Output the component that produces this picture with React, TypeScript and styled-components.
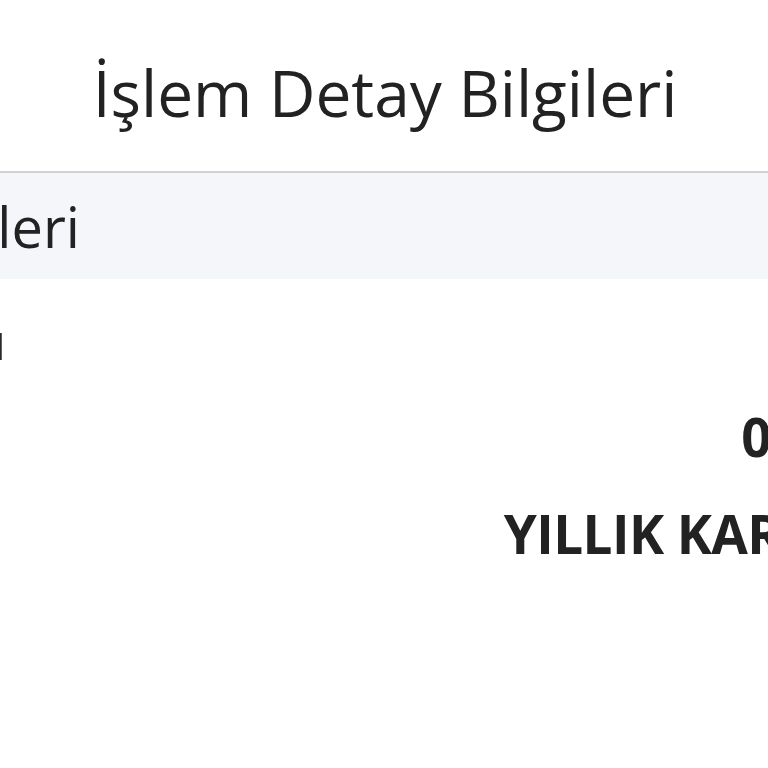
import React from 'react';
import styled, { createGlobalStyle } from 'styled-components';

const GlobalStyle = createGlobalStyle`
  html, body {
    margin: 0;
    padding: 0;
    background: #ffffff;
    overflow: hidden;
  }
  body {
    font-family: "Open Sans", "Noto Sans", sans-serif;
    color: #222222;
  }
`;

const Screen = styled.div`
  width: 768px;
  height: 768px;
  overflow: hidden;
  background: #ffffff;
`;

// the page is wider than the viewport, we only see its middle part
const Page = styled.div`
  width: 1382px;
  margin-left: -306px;
`;

const Header = styled.header`
  box-sizing: border-box;
  height: 173px;
  padding-top: 61px;
  border-bottom: 2px solid #d2d2d2;
  text-align: center;
`;

const Title = styled.h1`
  margin: 0;
  font-size: 64px;
  font-weight: 400;
  line-height: 1;
  color: #222222;
`;

const SectionBand = styled.div`
  box-sizing: border-box;
  height: 106px;
  display: flex;
  align-items: center;
  padding: 0 68px 0 40px;
  background: #f5f6fa;
`;

const SectionTitle = styled.h2`
  margin: 0;
  font-size: 56px;
  font-weight: 400;
  line-height: 1;
  color: #222222;
`;

const List = styled.div`
  padding: 15px 68px 0 40px;
`;

const Row = styled.div`
  display: flex;
  justify-content: space-between;
  align-items: baseline;
  line-height: 95px;
`;

const Label = styled.span`
  font-size: 49.5px;
  color: #2a2a2a;
`;

const Value = styled.span`
  font-size: 53px;
  font-weight: 700;
  color: #222222;
  text-align: right;
  letter-spacing: -0.6px;
`;

const rows = [
  { label: 'İşlem Tutarı', value: '' },
  { label: 'İşlem Tarihi', value: '09.01.2024' },
  { label: 'Açıklama', value: 'YILLIK KART ÜCRETİ' },
];

const App: React.FC = () => {
  return (
    <Screen>
      <GlobalStyle />
      <Page>
        <Header>
          <Title>İşlem Detay Bilgileri</Title>
        </Header>
        <SectionBand>
          <SectionTitle>İşlem Bilgileri</SectionTitle>
        </SectionBand>
        <List>
          {rows.map(row => (
            <Row key={row.label}>
              <Label>{row.label}</Label>
              <Value>{row.value}</Value>
            </Row>
          ))}
        </List>
      </Page>
    </Screen>
  );
};

export default App;
